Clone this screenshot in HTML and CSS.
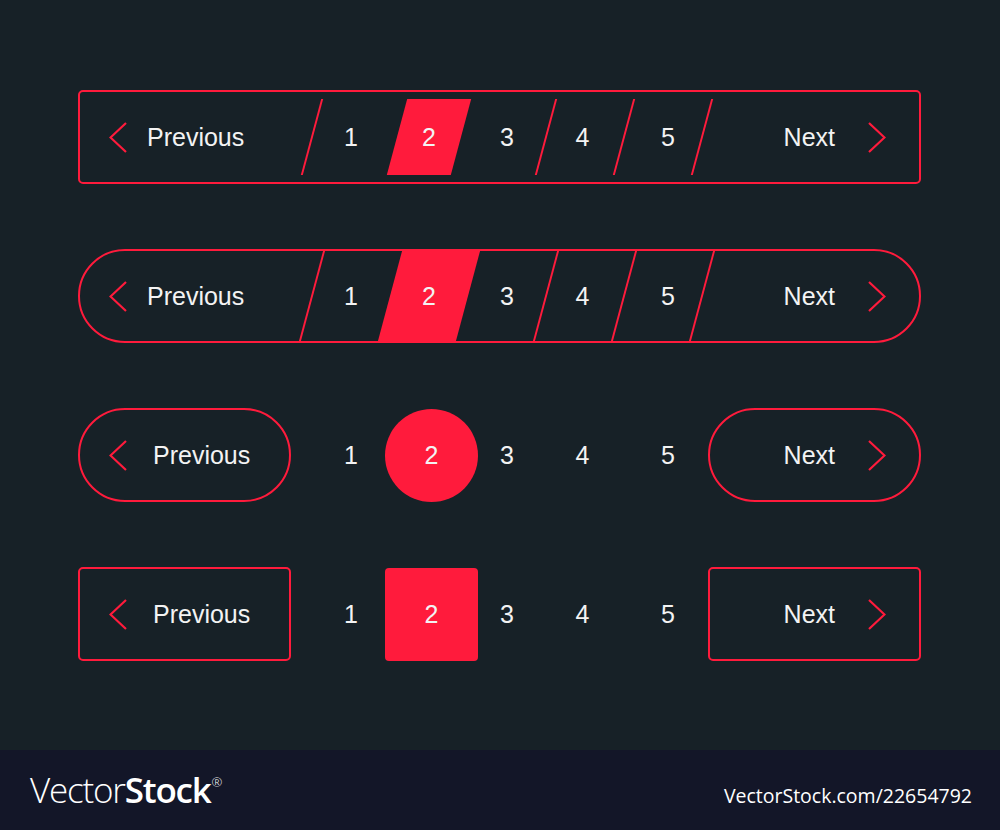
FILE: index.html
```html
<!DOCTYPE html>
<html>
<head>
<meta charset="utf-8">
<title>Pagination</title>
<link rel="stylesheet" href="styles.css">
</head>
<body>
<main class="canvas">
  <nav class="bar bar-slash">
    <div class="prev"><svg class="chev" viewBox="0 0 18 31"><polyline points="17,1 1.5,15.5 17,30"/></svg><span>Previous</span></div>
    <div class="cell sep">1</div>
    <div class="cell active"><span>2</span></div>
    <div class="cell">3</div>
    <div class="cell sep n4">4</div>
    <div class="cell sep n5">5</div>
    <div class="next sep"><span>Next</span><svg class="chev" viewBox="0 0 18 31"><polyline points="1,1 16.5,15.5 1,30"/></svg></div>
  </nav>

  <nav class="bar bar-pill">
    <div class="prev"><svg class="chev" viewBox="0 0 18 31"><polyline points="17,1 1.5,15.5 17,30"/></svg><span>Previous</span></div>
    <div class="cell sep">1</div>
    <div class="cell active"><span>2</span></div>
    <div class="cell">3</div>
    <div class="cell sep n4">4</div>
    <div class="cell sep n5">5</div>
    <div class="next sep"><span>Next</span><svg class="chev" viewBox="0 0 18 31"><polyline points="1,1 16.5,15.5 1,30"/></svg></div>
  </nav>

  <nav class="row row-round">
    <div class="btn prev"><svg class="chev" viewBox="0 0 18 31"><polyline points="17,1 1.5,15.5 17,30"/></svg><span>Previous</span></div>
    <div class="pages">
      <div class="cell">1</div>
      <div class="cell"><span class="mark">2</span></div>
      <div class="cell">3</div>
      <div class="cell n4">4</div>
      <div class="cell n5">5</div>
    </div>
    <div class="btn next"><span>Next</span><svg class="chev" viewBox="0 0 18 31"><polyline points="1,1 16.5,15.5 1,30"/></svg></div>
  </nav>

  <nav class="row row-square">
    <div class="btn prev"><svg class="chev" viewBox="0 0 18 31"><polyline points="17,1 1.5,15.5 17,30"/></svg><span>Previous</span></div>
    <div class="pages">
      <div class="cell">1</div>
      <div class="cell"><span class="mark">2</span></div>
      <div class="cell">3</div>
      <div class="cell n4">4</div>
      <div class="cell n5">5</div>
    </div>
    <div class="btn next"><span>Next</span><svg class="chev" viewBox="0 0 18 31"><polyline points="1,1 16.5,15.5 1,30"/></svg></div>
  </nav>
</main>
<footer class="footer">
  <div class="logo"><span class="logo-thin">Vector</span><span class="logo-bold">Stock</span><sup class="reg">®</sup></div>
  <div class="ref">VectorStock.com/22654792</div>
</footer>
</body>
</html>
```

FILE: styles.css
```css
* { box-sizing: border-box; }

html, body {
  margin: 0;
  padding: 0;
  width: 1000px;
  height: 830px;
  overflow: hidden;
}

body {
  font-family: "Liberation Sans", Arial, sans-serif;
  color: #f3f3f3;
  background: #131628;
}

.canvas {
  height: 750px;
  background: #172127;
  padding-top: 90px;
  display: flex;
  flex-direction: column;
  gap: 65px;
}

.chev {
  width: 18px;
  height: 31px;
  flex: none;
  display: block;
}
.chev polyline {
  fill: none;
  stroke: #ff1b3c;
  stroke-width: 2.2;
}

/* ---------- rows 1 & 2 : single bar ---------- */
.bar {
  margin-left: 78px;
  width: 843px;
  height: 94px;
  border: 2px solid #ff1b3c;
  display: flex;
  align-items: stretch;
  font-size: 25px;
}
.bar-slash { border-radius: 5px; }
.bar-pill { border-radius: 47px; }

.prev {
  display: flex;
  align-items: center;
  gap: 20px;
  padding-left: 29px;
}
.bar .prev { width: 232px; flex: none; }

.cell {
  position: relative;
  width: 78px;
  flex: none;
  display: flex;
  align-items: center;
  justify-content: center;
}
.cell.n4 { padding-right: 5px; }
.cell.n5 { padding-left: 10px; }

.next {
  position: relative;
  flex: 1;
  display: flex;
  align-items: center;
  justify-content: flex-end;
  gap: 33px;
  padding-right: 33px;
}

.sep::before {
  content: "";
  position: absolute;
  left: -1px;
  width: 2px;
  background: #ff1b3c;
  transform: skewX(-15deg);
}
.bar-slash .sep::before { top: 7px; bottom: 7px; }
.bar-pill .sep::before { top: -2px; bottom: -2px; }

.bar .active::before {
  content: "";
  position: absolute;
  background: #ff1b3c;
  transform: skewX(-15deg);
}
.bar-slash .active::before { left: 7px; right: 7px; top: 7px; bottom: 7px; }
.bar-pill .active::before { left: 0; right: 0; top: -2px; bottom: -2px; }
.bar .active span { position: relative; }

/* ---------- rows 3 & 4 : separate buttons ---------- */
.row {
  margin-left: 78px;
  width: 843px;
  height: 94px;
  display: flex;
  align-items: stretch;
  font-size: 25px;
}
.btn {
  width: 213px;
  flex: none;
  border: 2px solid #ff1b3c;
}
.btn.prev { gap: 26px; }
.btn.next { flex: none; }
.row-round .btn { border-radius: 47px; }
.row-square .btn { border-radius: 5px; }

.pages {
  display: flex;
  margin: 0 6px 0 21px;
}
.mark {
  flex: none;
  width: 93px;
  height: 93px;
  margin: 0 -10px 0 -5px;
  background: #ff1b3c;
  display: flex;
  align-items: center;
  justify-content: center;
}
.row-round .mark { border-radius: 50%; }
.row-square .mark { border-radius: 4px; }

/* ---------- footer ---------- */
.footer {
  height: 80px;
  background: #131628;
  display: flex;
  align-items: baseline;
  justify-content: space-between;
  padding: 22px 28px 0 30px;
  color: #ffffff;
}
.logo {
  font-family: "Open Sans", "Noto Sans", sans-serif;
  font-size: 35px;
  letter-spacing: -1.2px;
  line-height: 1;
}
.logo-thin { font-weight: 300; }
.logo-bold { font-weight: 600; }
.reg {
  font-size: 13px;
  font-weight: 300;
  vertical-align: 16px;
  margin-left: 1px;
  letter-spacing: 0;
}
.ref {
  font-family: "Open Sans", "Noto Sans", sans-serif;
  font-size: 19.5px;
  line-height: 1;
}
```
